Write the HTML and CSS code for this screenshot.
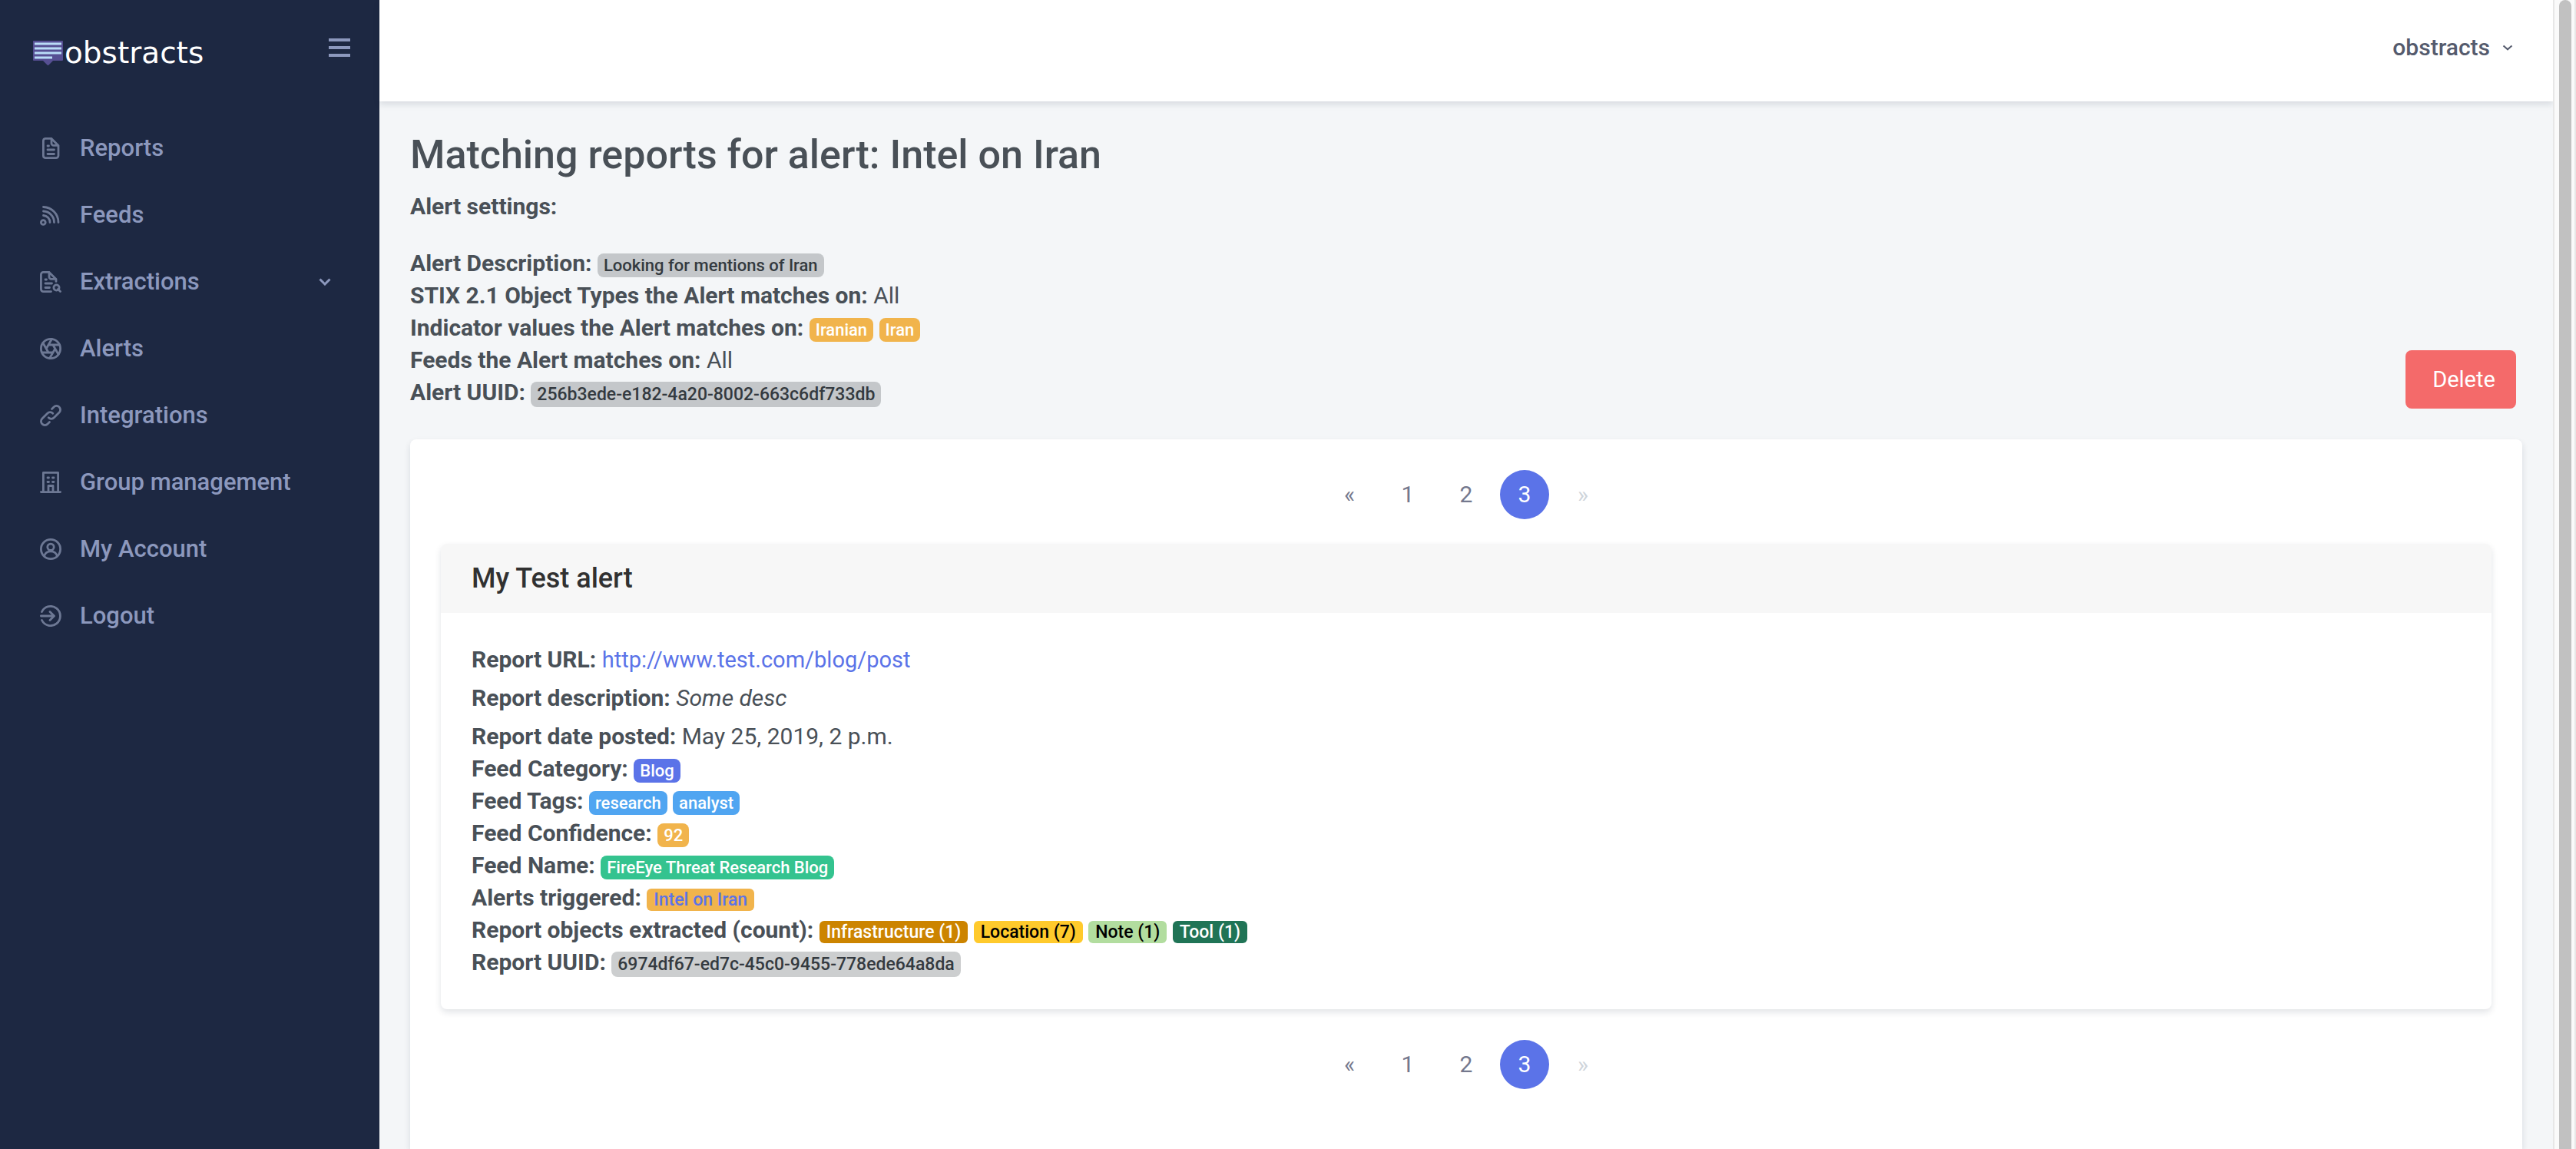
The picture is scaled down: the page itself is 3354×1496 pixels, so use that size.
FILE: index.html
```html
<!DOCTYPE html>
<html lang="en">
<head>
<meta charset="utf-8">
<title>Matching reports for alert: Intel on Iran</title>
<link rel="stylesheet" href="styles.css">
</head>
<body>
<aside class="sidebar">
  <div class="brand-row">
    <a class="brand" href="#">
      <svg class="brand-mark" viewBox="0 0 39 32" aria-hidden="true">
        <path fill="#564f93" d="M1 0h37a1 1 0 0 1 1 1v24a1 1 0 0 1-1 1H26l-6 6h-1l-6-6H1a1 1 0 0 1-1-1V1a1 1 0 0 1 1-1z"/>
        <path stroke="#b9dcf7" stroke-width="3" d="M2 4h35M2 10h35M2 16h35M2 22h23"/>
      </svg>
      <span>obstracts</span>
    </a>
    <button class="menu-toggle" type="button" aria-label="Toggle menu"><span></span><span></span><span></span></button>
  </div>
  <nav>
    <ul class="nav">
      <li><a href="#"><svg class="icon" viewBox="0 0 28 28"><path d="M15 1.4H7A3 3 0 0 0 4.400 4.400v19.200A3 3 0 0 0 7 26.600h14a3 3 0 0 0 3-3V10.400L15 1.400v6a3 3 0 0 0 3 3h6M10 11h1.500M10 16h8.500M10 21.500h8.500"/></svg><span>Reports</span></a></li>
      <li><a href="#"><svg class="icon" viewBox="0 0 28 28"><circle cx="4.300" cy="23.500" r="2.900"/><path d="M4.500 3.500A20 20 0 0 1 24 23.500M4.500 9A14.500 14.500 0 0 1 18.500 23.500M4.500 14.500A9 9 0 0 1 13 23.500"/></svg><span>Feeds</span></a></li>
      <li><a href="#"><svg class="icon" viewBox="0 0 28 28"><path d="M14.500 26.600H4.400a3 3 0 0 1-3-3V4.400a3 3 0 0 1 3-3H12l9 9v3M12 1.400v6a3 3 0 0 0 3 3h6M7 11h1.500M7 16h8.500M7 21.500h5.500M23.500 23.500l3 3"/><circle cx="21.500" cy="21.500" r="3.600"/></svg><span>Extractions</span><svg class="caret" viewBox="0 0 16 10"><path d="M1.500 1.500L8 8l6.500-6.500"/></svg></a></li>
      <li><a href="#"><svg class="icon" viewBox="0 0 28 28"><circle cx="14" cy="14" r="12.600"/><path d="M16.900 9l7.200 12.500M11.100 9h14.400M8.200 14l7.200-12.500M11.100 19L3.900 6.500M16.900 19H2.500M19.800 14l-7.200 12.500"/></svg><span>Alerts</span></a></li>
      <li><a href="#"><svg class="icon" viewBox="0 0 28 28"><path d="M11.200 16.800a5 5 0 0 0 7.100 0l6.800-6.800a5 5 0 0 0-7.100-7.100l-2.500 2.500M16.800 11.200a5 5 0 0 0-7.100 0L2.900 18a5 5 0 0 0 7.100 7.100l2.500-2.500"/></svg><span>Integrations</span></a></li>
      <li><a href="#"><svg class="icon" viewBox="0 0 28 28"><path d="M1.400 26.600h25.200M4.400 26V1.400h19.200V26M11 26v-7.500h6V26M10 8h1.500M16.500 8H18M10 13.500h1.500M16.500 13.500H18"/></svg><span>Group management</span></a></li>
      <li><a href="#"><svg class="icon" viewBox="0 0 28 28"><circle cx="14" cy="14" r="12.600"/><circle cx="14" cy="11.300" r="4.200"/><path d="M5.500 23a9 9 0 0 1 17 0"/></svg><span>My Account</span></a></li>
      <li><a href="#"><svg class="icon" viewBox="0 0 28 28"><path d="M2.500 8.500a12.600 12.600 0 1 1 0 11M1.400 14h17M13 8.500l5.500 5.500-5.500 5.500"/></svg><span>Logout</span></a></li>
    </ul>
  </nav>
</aside>
<div class="page">
  <header class="topbar">
    <button class="user-menu" type="button">obstracts<svg viewBox="0 0 14 8" aria-hidden="true"><path d="M1.500 1.500L7 6.300l5.500-4.800"/></svg></button>
  </header>
  <main class="content">
    <section class="alert-head">
      <div>
        <h1>Matching reports for alert: Intel on Iran</h1>
        <p class="settings-title">Alert settings:</p>
        <p><b>Alert Description:</b> <span class="badge gray">Looking for mentions of Iran</span></p>
        <p><b>STIX 2.1 Object Types the Alert matches on:</b> All</p>
        <p><b>Indicator values the Alert matches on:</b> <span class="badge amber">Iranian</span> <span class="badge amber">Iran</span></p>
        <p><b>Feeds the Alert matches on:</b> All</p>
        <p><b>Alert UUID:</b> <span class="badge gray uuid">256b3ede-e182-4a20-8002-663c6df733db</span></p>
      </div>
      <button class="delete" type="button">Delete</button>
    </section>
    <section class="panel">
      <nav class="pager" aria-label="Pages">
        <a href="#">«</a><a href="#">1</a><a href="#">2</a><a class="current" href="#">3</a><a class="off" href="#">»</a>
      </nav>
      <article class="report">
        <h2>My Test alert</h2>
        <div class="report-body">
          <p class="spaced"><b>Report URL:</b> <a class="report-link" href="#">http://www.test.com/blog/post</a></p>
          <p class="spaced"><b>Report description:</b> <i>Some desc</i></p>
          <p><b>Report date posted:</b> May 25, 2019, 2 p.m.</p>
          <p><b>Feed Category:</b> <span class="badge indigo">Blog</span></p>
          <p><b>Feed Tags:</b> <span class="badge blue">research</span> <span class="badge blue">analyst</span></p>
          <p><b>Feed Confidence:</b> <span class="badge amber">92</span></p>
          <p><b>Feed Name:</b> <span class="badge green">FireEye Threat Research Blog</span></p>
          <p><b>Alerts triggered:</b> <a class="tag amber" href="#">Intel on Iran</a></p>
          <p><b>Report objects extracted (count):</b> <span class="tag infrastructure">Infrastructure (1)</span> <span class="tag location">Location (7)</span> <span class="tag note">Note (1)</span> <span class="tag tool">Tool (1)</span></p>
          <p><b>Report UUID:</b> <span class="badge gray uuid">6974df67-ed7c-45c0-9455-778ede64a8da</span></p>
        </div>
      </article>
      <nav class="pager" aria-label="Pages, bottom">
        <a href="#">«</a><a href="#">1</a><a href="#">2</a><a class="current" href="#">3</a><a class="off" href="#">»</a>
      </nav>
    </section>
  </main>
</div>
<div class="scroll-track"><div class="scroll-thumb"></div></div>
</body>
</html>
```
FILE: styles.css
```css
* { box-sizing: border-box; }
body {
  margin: 0;
  display: flex;
  height: 100vh;
  overflow: hidden;
  background: #f4f6f8;
  color: #495057;
  font: 30px/42px Roboto, "Liberation Sans", sans-serif;
}
h1, h2, p, ul { margin: 0; padding: 0; }
a { color: #5b73e8; text-decoration: none; }
button { border: 0; background: none; font: inherit; color: inherit; padding: 0; cursor: pointer; }
b { font-weight: 700; }
svg { fill: none; }

.sidebar { width: 494px; flex: none; background: #1d2842; }
.brand-row { display: flex; justify-content: space-between; align-items: flex-start; padding: 41px 38px 0 43px; height: 149px; }
.brand { display: flex; align-items: center; gap: 2px; color: #fff; font: 39px/56px "DejaVu Sans", sans-serif; }
.brand-mark { width: 39px; height: 32px; }
.menu-toggle { display: flex; flex-direction: column; gap: 6px; padding-top: 9px; }
.menu-toggle span { width: 28px; height: 4px; background: #8c98bd; }
.nav { list-style: none; }
.nav a { display: flex; align-items: center; height: 87px; padding: 0 63px 0 52px; gap: 24px; color: #8c98bd; font-weight: 500; }
.nav a span { flex: 1; font-size: 31px; }
.icon { width: 28px; height: 28px; stroke: #6d7894; stroke-width: 2.8; stroke-linecap: round; stroke-linejoin: round; }
.caret { width: 16px; height: 10px; stroke: #8c98bd; stroke-width: 3; }

.page { flex: 1; min-width: 0; display: flex; flex-direction: column; }
.topbar { flex: none; height: 132px; background: #fff; box-shadow: 0 4px 8px rgba(15, 34, 58, 0.12); display: flex; justify-content: flex-end; align-items: flex-start; padding: 41px 52px 0; }
.user-menu { display: flex; align-items: center; gap: 16px; color: #555b6d; font-weight: 500; }
.user-menu svg { width: 14px; height: 8px; stroke: #555b6d; stroke-width: 2; }
.content { flex: 1; min-height: 0; display: flex; flex-direction: column; padding: 40px 40px 0; }

.alert-head { display: flex; justify-content: space-between; align-items: flex-end; padding-right: 8px; margin-bottom: 40px; }
h1 { font-size: 52px; line-height: 60px; font-weight: 500; }
.settings-title { margin: 16px 0 32px; font-weight: 700; }
.delete { width: 144px; height: 76px; padding-left: 8px; border-radius: 8px; background: #f46a6a; color: #fff; font-size: 29px; }

.panel { flex: 1 0 auto; padding: 40px; border-radius: 8px 8px 0 0; background: #fff; box-shadow: 0 4px 8px rgba(15, 34, 58, 0.12); }
.pager { display: flex; justify-content: center; gap: 12px; }
.pager a { width: 64px; height: 64px; border-radius: 50%; line-height: 64px; text-align: center; color: #74788d; }
.pager .current { background: #5b73e8; color: #fff; }
.pager .off { color: #ced4da; }

.report { margin: 32px 0 40px; border-radius: 8px; background: #fff; box-shadow: 0 4px 8px rgba(15, 34, 58, 0.12); }
.report h2 { padding: 24px 40px; border-radius: 8px 8px 0 0; background: #f7f7f7; color: #313131; font-size: 36px; line-height: 42px; font-weight: 500; }
.report-body { padding: 40px; }
.report-link { font-size: 29px; line-height: 1; }
.spaced { margin-bottom: 8px; }

.badge, .tag { font-size: 22px; line-height: 1; font-weight: 500; color: #fff; }
.badge { padding: 3px 8px; border-radius: 8px; }
.tag { padding: 1px 9px; border-radius: 6px; }
.tag, .uuid { font-size: 23px; }
.gray { background: rgba(52, 58, 64, 0.25); color: #343a40; }
.amber { background: #f1b44c; }
.indigo { background: #5b73e8; }
.blue { background: #50a5f1; }
.green { background: #34c38f; }
a.tag { color: #5b73e8; }
.infrastructure { background: #cc8400; }
.location { background: #ffca2c; color: #000; }
.note { background: #b2dd9f; color: #000; }
.tool { background: #207456; }

.scroll-track { flex: none; width: 30px; padding: 0 4px 0 6px; background: #fafafa; border: solid #e7e7e7; border-width: 0 2px; }
.scroll-thumb { width: 16px; height: 100%; border-radius: 8px 8px 0 0; background: #c1c1c1; }
```
